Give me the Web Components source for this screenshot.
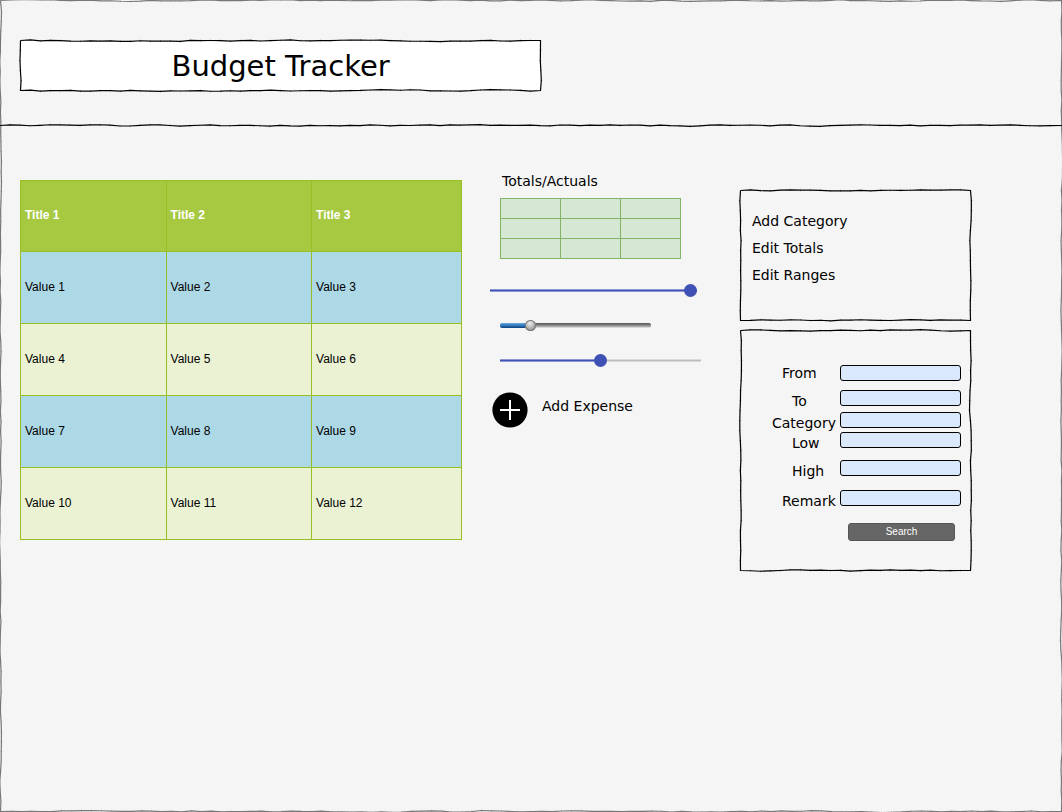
<!DOCTYPE html>
<html lang="en">
<head>
<meta charset="utf-8">
<meta name="viewport" content="width=device-width, initial-scale=1">
<title>Budget Tracker</title>
<style>
  body { margin: 0; background: #f5f5f5; color: #000; font: 14px/16px "DejaVu Sans", Verdana, sans-serif; }
</style>
</head>
<body>
<budget-app></budget-app>

<script>
class BaseElement extends HTMLElement {
  constructor() {
    super();
    this.attachShadow({ mode: 'open' }).innerHTML =
      `<style>*{box-sizing:border-box}:host{display:block;box-sizing:border-box}</style>` + this.view();
  }
}

/* Box or rule with a wavering, hand-drawn outline */
class SketchFrame extends BaseElement {
  view() {
    return `<style>
      :host { position: relative; }
      svg { position: absolute; inset: 0; width: 100%; height: 100%; overflow: visible; pointer-events: none; }
      path { fill: none; stroke: var(--ink, #000); stroke-width: 1.2; }
      .fill { fill: var(--paper, none); stroke: none; }
      .ticks { stroke-width: 1; opacity: .3; }
      .content { position: relative; }
    </style>
    <svg aria-hidden="true"><path class="fill"/><path class="line"/><path class="ticks"/></svg>
    <div class="content"><slot></slot></div>`;
  }
  connectedCallback() {
    this.observer = new ResizeObserver(() => this.draw());
    this.observer.observe(this);
    this.draw();
  }
  disconnectedCallback() { this.observer.disconnect(); }
  draw() {
    const w = this.clientWidth, h = this.clientHeight;
    if (!w) return;
    let seed = Number(this.getAttribute('seed')) || 1;
    let drift = 0;
    const wobble = () => {
      seed = (seed * 16807) % 2147483647;
      drift = drift * .5 + (seed / 2147483647 - .5) * 1.3;
      return drift;
    };
    const rule = this.hasAttribute('rule');
    const l = .5, t = .5, r = w - .5, b = h - .5;
    const corners = rule ? [[0, t], [w, t]] : [[l, t], [r, t], [r, b], [l, b], [l, t]];
    const points = [corners[0]];
    let ticks = '';
    for (let i = 1; i < corners.length; i++) {
      const [x0, y0] = corners[i - 1], [x1, y1] = corners[i];
      const length = Math.hypot(x1 - x0, y1 - y0);
      const dx = (x1 - x0) / length, dy = (y1 - y0) / length;
      for (let d = 10; d < length - 4; d += 10) {
        const n = wobble();
        const x = x0 + dx * d - dy * n, y = y0 + dy * d + dx * n;
        points.push([x, y]);
        ticks += `M${x - dy} ${y + dx}L${x + dy} ${y - dx}`;
      }
      points.push([x1, y1]);
    }
    const d = 'M' + points.map(p => p[0].toFixed(2) + ' ' + p[1].toFixed(2)).join('L');
    const $ = s => this.shadowRoot.querySelector(s);
    $('.line').setAttribute('d', d);
    $('.fill').setAttribute('d', rule ? '' : d);
    $('.ticks').setAttribute('d', ticks);
  }
}

class ValueTable extends BaseElement {
  view() {
    const rows = [[1, 2, 3], [4, 5, 6], [7, 8, 9], [10, 11, 12]];
    return `<style>
      table { width: 100%; border-collapse: collapse; table-layout: fixed; background: #eaf2d3;
              font: 12px/16px "Liberation Sans", Helvetica, Arial, sans-serif; }
      th, td { height: 72px; padding: 0 4px 2px; border: 1px solid #98bf21; text-align: left; vertical-align: middle; }
      th { height: 71px; background: #a7c942; color: #fff; }
      th:nth-child(2) { width: 33%; }
      th:nth-child(3) { width: 34%; }
      tbody tr:nth-child(odd) { background: #add8e6; }
    </style>
    <table>
      <thead><tr><th scope="col">Title 1</th><th scope="col">Title 2</th><th scope="col">Title 3</th></tr></thead>
      <tbody>${rows.map(r => `<tr>${r.map(n => `<td>Value ${n}</td>`).join('')}</tr>`).join('')}</tbody>
    </table>`;
  }
}

class TotalsTable extends BaseElement {
  view() {
    const row = '<tr><td></td><td></td><td></td></tr>';
    return `<style>
      table { width: 181px; max-width: 100%; border-collapse: collapse; table-layout: fixed; background: #d5e8d4; }
      caption { padding: 0 2px 9px; text-align: left; }
      td { height: 20px; padding: 0; border: 1px solid #82b366; }
    </style>
    <table><caption>Totals/Actuals</caption><tbody>${row + row + row}</tbody></table>`;
  }
}

class RangeSlider extends BaseElement {
  view() {
    return `<style>
      :host { height: 13px; max-width: 100%; --thumb: 13px; --line: 3px;
              --done: linear-gradient(#8c97d3 1px, #3f51b5 1px 2px, #8c97d3 2px);
              --rest: linear-gradient(#dadada 1px, #bdbdbd 1px 2px, #dadada 2px);
              --knob: #3f51b5; --knob-edge: none; }
      :host([metal]) { --thumb: 11px; --line: 5px;
              --done: linear-gradient(#68a9df, #2f79bd 50%, #0b3f7c);
              --rest: linear-gradient(#555, #777 35%, #bbb 80%, #f5f5f5);
              --knob: radial-gradient(circle at 45% 30%, #eee, #aaa 55%, #777);
              --knob-edge: inset 0 0 0 1px #777; }
      input { appearance: none; display: block; width: 100%; height: 13px; margin: 0; background: none; }
      input::-webkit-slider-runnable-track { height: var(--line);
              background: var(--done) 0 0 / var(--split) 100% no-repeat, var(--rest); }
      :host([metal]) input::-webkit-slider-runnable-track { border-radius: 2px; }
      input::-webkit-slider-thumb { appearance: none; width: var(--thumb); height: var(--thumb);
              margin-top: calc((var(--line) - var(--thumb)) / 2); border-radius: 50%;
              background: var(--knob); box-shadow: var(--knob-edge); }
    </style>
    <input type="range" min="0" max="100">`;
  }
  connectedCallback() {
    const input = this.shadowRoot.querySelector('input');
    input.value = this.getAttribute('value');
    input.setAttribute('aria-label', this.getAttribute('label'));
    const paint = () => this.style.setProperty('--split', input.value + '%');
    input.addEventListener('input', paint);
    paint();
  }
}

class AddButton extends BaseElement {
  view() {
    return `<style>
      button { display: flex; gap: 14px; padding: 0; border: 0; background: none; color: inherit;
               font: inherit; line-height: 28px; cursor: pointer; }
      svg { display: block; flex: none; width: 36px; height: 36px; }
    </style>
    <button type="button">
      <svg viewBox="0 0 36 36" aria-hidden="true"><circle cx="18" cy="18" r="17.6"/><path d="M8 18H28M18 8V28" stroke="#fff" stroke-width="2"/></svg>
      <slot></slot>
    </button>`;
  }
}

class ActionMenu extends BaseElement {
  view() {
    return `<style>
      ul { margin: 0; padding: 18px 12px 32px; list-style: none; }
      a { display: block; color: inherit; text-decoration: none; line-height: 27px; }
    </style>
    <ul><li><a href="#category">Add Category</a></li><li><a href="#totals">Edit Totals</a></li><li><a href="#ranges">Edit Ranges</a></li></ul>`;
  }
}

class SearchForm extends BaseElement {
  view() {
    const fields = [['From', 'mid first'], ['To', 'deep'], ['Category', ''], ['Low', 'deep'], ['High', 'deep'], ['Remark', 'mid']];
    return `<style>
      form { display: grid; grid-template-columns: 68px 1fr; padding: 35px 10px 30px 32px;
             grid-template-rows: 25px 22px 20px 28px 30px 33px; }
      label { line-height: 22px; white-space: nowrap; }
      .mid { padding-left: 10px; }
      .deep { padding-left: 20px; }
      .first { line-height: 16px; }
      input { width: 100%; min-width: 0; height: 16px; margin: 0; padding: 0 4px; border: 1px solid #000;
              border-radius: 3px; background: #dae8fc; font: 12px "Liberation Sans", Arial, sans-serif; }
      button { grid-column: 2; height: 18px; margin: 0 6px 0 8px; padding: 0; border: 1px solid #555; border-radius: 3px;
               background: #666; color: #fff; font: 10px/16px "Liberation Sans", Helvetica, Arial, sans-serif; }
    </style>
    <form onsubmit="return false">
      ${fields.map(([n, c]) => `<label class="${c}" for="${n}">${n}</label><input id="${n}" name="${n}">`).join('')}
      <button>Search</button>
    </form>`;
  }
}

class BudgetApp extends BaseElement {
  view() {
    return `<style>
      .page { --ink: #777; min-height: 100vh; }
      header { padding: 40px 20px 34px; }
      .title { --ink: #000; --paper: #fff; width: 51%; }
      h1 { margin: 0; padding: 10px 9px 8px; font-size: 29px; line-height: 33px; font-weight: 400; text-align: center; }
      .divider { --ink: #000; height: 1px; }
      main { display: grid; grid-template-columns: 442fr 222fr 231fr; gap: 28px; align-items: start; padding: 47px 91px 40px 20px; }
      value-table { margin-top: 7px; }
      .widgets { display: flex; flex-direction: column; align-items: flex-start; padding-left: 10px; }
      totals-table { margin-bottom: 25px; }
      .long { width: 207px; margin-left: -10px; }
      .metal { width: 151px; margin: 22px 0; }
      .half { width: 201px; }
      add-button { margin: 25px 0 0 -8px; }
      .side { display: grid; gap: 9px; margin-top: 17px; --ink: #000; }
    </style>
    <sketch-frame class="page" seed="77">
      <header><sketch-frame class="title" seed="4242"><h1>Budget Tracker</h1></sketch-frame></header>
      <sketch-frame class="divider" rule seed="901"></sketch-frame>
      <main>
        <value-table></value-table>
        <section class="widgets">
          <totals-table></totals-table>
          <range-slider class="long" value="100" label="Total range"></range-slider>
          <range-slider class="metal" metal value="18" label="Actual range"></range-slider>
          <range-slider class="half" value="50" label="Spending range"></range-slider>
          <add-button>Add Expense</add-button>
        </section>
        <aside class="side">
          <sketch-frame seed="3131"><action-menu></action-menu></sketch-frame>
          <sketch-frame seed="656"><search-form></search-form></sketch-frame>
        </aside>
      </main>
    </sketch-frame>`;
  }
}

customElements.define('sketch-frame', SketchFrame);
customElements.define('value-table', ValueTable);
customElements.define('totals-table', TotalsTable);
customElements.define('range-slider', RangeSlider);
customElements.define('add-button', AddButton);
customElements.define('action-menu', ActionMenu);
customElements.define('search-form', SearchForm);
customElements.define('budget-app', BudgetApp);
</script>
</body>
</html>
